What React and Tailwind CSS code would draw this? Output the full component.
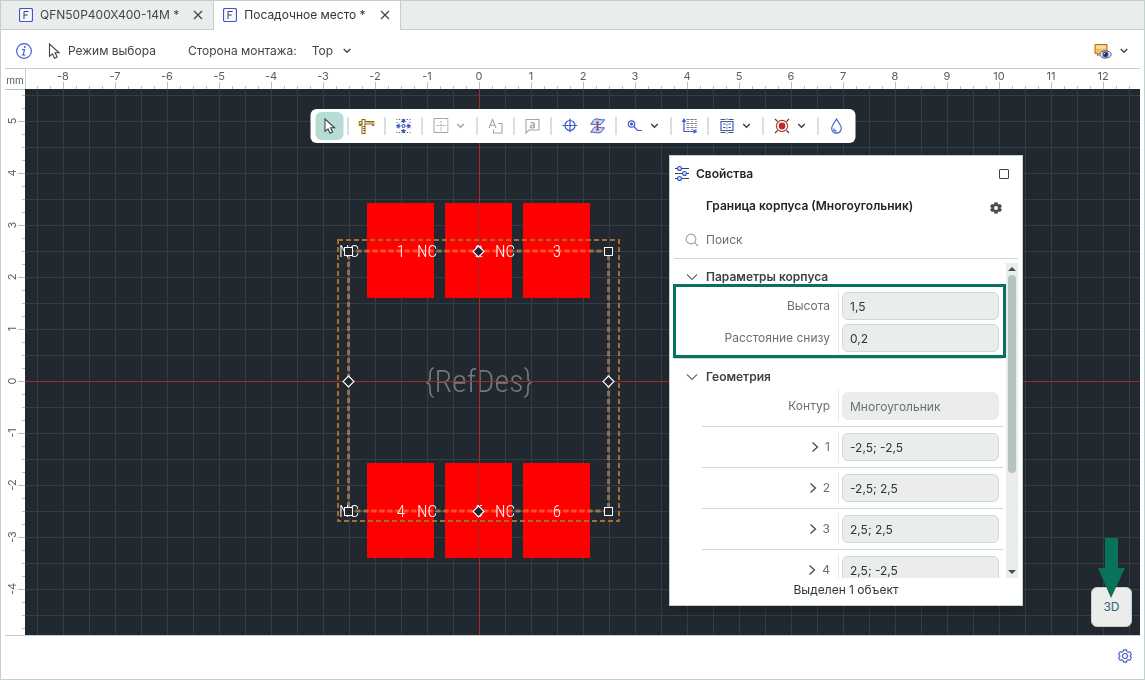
import React, { useEffect, useState } from 'react';

const UNIT = 52;
const ORIGIN_X = 454;
const ORIGIN_Y = 292;

const range = (from, to) => Array.from({ length: to - from + 1 }, (_, i) => from + i);

const useWindowSize = () => {
    const [size, setSize] = useState({ width: window.innerWidth, height: window.innerHeight });

    useEffect(() => {
        const onResize = () => setSize({ width: window.innerWidth, height: window.innerHeight });
        window.addEventListener('resize', onResize);
        return () => window.removeEventListener('resize', onResize);
    }, []);

    return size;
};

const ChevronDown = ({ className = '' }) => (
    <svg viewBox="0 0 8 6" className={`w-2 h-1.5 shrink-0 ${className}`} fill="none" stroke="currentColor" strokeWidth="1.4">
        <path d="M0.7 1 4 4.3 7.3 1" />
    </svg>
);

const CursorIcon = () => (
    <svg viewBox="0 0 16 16" className="w-4 h-4 shrink-0" fill="#fff" stroke="#3c4443" strokeWidth="1.1">
        <path d="M3.5 1v12.300l3-2.500 2 4.400 2.600-1.200-2-4.200h4z" />
    </svg>
);

const CaliperIcon = () => (
    <svg viewBox="0 0 16 16" className="w-4 h-4 shrink-0" fill="none" stroke="#94660f" strokeWidth="1.1">
        <path d="M3.500 1.500h3v14h-3zM6.500 3.500h9v4h-1.500v-1.500h-7.500M3.500 3.500h-2.900v4h1.300v-1.500h1.600" />
        <path d="M4.500 8.500h2M4.500 10.500h2M4.500 12.500h2M9.500 3.500v1.500M11.500 3.500v1.500M13.500 3.500v1.500" strokeWidth="1" />
    </svg>
);

const MoveGridIcon = () => (
    <svg viewBox="0 0 16 16" className="w-4 h-4 shrink-0" fill="none">
        <path d="M1 1.500h14M1 14.500h14" stroke="#4a5452" strokeDasharray="1 1.600" />
        <path d="M1.500 4v8M14.500 4v8" stroke="#4a5452" strokeDasharray="1 1.600" />
        <path d="M8 0.500 10.800 4h-5.600zM8 15.500 10.800 12h-5.600zM0.500 8 4 5.200v5.600zM15.500 8 12 5.200v5.600z" fill="#3c58cc" />
        <path d="M8 3v2M8 11v2M3 8h2M11 8h2" stroke="#3c58cc" strokeWidth="1.400" />
        <circle cx="8" cy="8" r="1.500" stroke="#3c58cc" strokeWidth="1.200" />
    </svg>
);

const CrossBoxIcon = () => (
    <svg viewBox="0 0 16 16" className="w-4 h-4 shrink-0" fill="none" stroke="#9da9a7">
        <path d="M1.500 0.500h14v14h-14z" />
        <path d="M8.500 3v10M4 7.500h10" strokeDasharray="2 1" />
    </svg>
);

const TextShapeIcon = () => (
    <svg viewBox="0 0 16 16" className="w-4 h-4 shrink-0" fill="none" stroke="#9da9a7" strokeWidth="1.100">
        <path d="M1.500 10 5 1.500 8.500 10M2.700 7.200h4.600M10.500 5.500h4v9.500h-8.500v-3.500" />
    </svg>
);

const NoteIcon = () => (
    <svg viewBox="0 0 16 16" className="w-4 h-4 shrink-0" fill="none" stroke="#9da9a7" strokeWidth="1.100">
        <path d="M1.500 1.500h13v10.500h-10l-3 3z" />
        <path d="M6 5.200c1.200-1 3.700-.8 3.700.8v4M9.700 7.200c-5-.3-4.700 2.700-2.200 2.700 1.200 0 2.200-.8 2.200-1.600" strokeWidth="1.400" />
    </svg>
);

const TargetIcon = () => (
    <svg viewBox="0 0 16 16" className="w-4 h-4 shrink-0" fill="none" stroke="#3c58cc" strokeWidth="1.200">
        <circle cx="8.500" cy="7.500" r="5" />
        <path d="M8.500 0.500v14M1 7.500h15" />
    </svg>
);

const LayersIcon = () => (
    <svg viewBox="0 0 16 16" className="w-4 h-4 shrink-0" stroke="#3c58cc" strokeWidth="1">
        <path d="M5 1.200c3.200-1.200 5.500 1.300 10 .5-1.500 1.500-1.700 4-4.500 5-3.300.8-6-1-9.500-.5C3.200 5 3 2.500 5 1.200z" fill="#c9d3f5" />
        <path d="M5 9.200c3.200-1.200 5.500 1.300 10 .5-1.500 1.500-1.700 4-4.500 5-3.300.8-6-1-9.500-.5C3.200 13 3 10.500 5 9.200z" fill="#c9d3f5" />
        <path d="M8 4v8M6.800 4.200h2.400M6.800 11.800h2.400" stroke="#b3302d" strokeWidth="1.400" />
    </svg>
);

const TrackIcon = () => (
    <svg viewBox="0 0 16 16" className="w-4 h-4 shrink-0" fill="none" stroke="#3c58cc" strokeWidth="1.200">
        <circle cx="5" cy="6" r="3.200" />
        <circle cx="5" cy="6" r="1" fill="#3c58cc" />
        <path d="M7.300 8.300 11 12.500h4.500" />
    </svg>
);

const AxesIcon = () => (
    <svg viewBox="0 0 16 16" className="w-4 h-4 shrink-0" fill="none">
        <path d="M5 1.500h10M5 5.500h10M5 9.500h10" stroke="#4a5452" strokeDasharray="1 1" />
        <path d="M6.500 1v11M10.500 1v11M14.500 1v11" stroke="#4a5452" strokeDasharray="1 1" />
        <path d="M2.500 3v10.500h11" stroke="#3c58cc" strokeWidth="1.200" />
        <path d="M2.500 0 4.800 4h-4.600zM16 13.500 12 11.200v4.600z" fill="#3c58cc" />
    </svg>
);

const ComponentIcon = () => (
    <svg viewBox="0 0 16 16" className="w-4 h-4 shrink-0" fill="none">
        <path d="M2 1.500h13M2 14.500h13" stroke="#4a5452" strokeWidth="1.200" strokeDasharray="5 3" />
        <path d="M2.500 3.500h12v9h-12z" stroke="#3c58cc" strokeWidth="1.200" />
        <path d="M4.500 6h2.500M4.500 9.500h2.500M10 6h2.500M10 9.500h2.500" stroke="#3c58cc" />
        <path d="M8.500 0v16" stroke="#7e8785" strokeDasharray="2 1" />
    </svg>
);

const PadIcon = () => (
    <svg viewBox="0 0 16 16" className="w-4 h-4 shrink-0" fill="none">
        <path d="M1.500 1l2.500 2.500M15.500 1l-2.500 2.500M1.500 15l2.500-2.500M15.500 15l-2.500-2.500" stroke="#3c4443" strokeWidth="1.200" />
        <circle cx="8.500" cy="8" r="5.600" stroke="#b3302d" strokeWidth="1.100" />
        <circle cx="8.500" cy="8" r="3.400" fill="#b3302d" />
    </svg>
);

const DropIcon = () => (
    <svg viewBox="0 0 16 16" className="w-4 h-4 shrink-0" fill="none" stroke="#3c58cc" strokeWidth="1.100">
        <path d="M8 1C6.500 4 3.200 7.300 3.200 10.500a4.800 4.600 0 0 0 9.600 0C12.800 7.300 9.500 4 8 1z" />
        <path d="M5.300 10.500a2.800 2.600 0 0 0 2.700 2.600" />
    </svg>
);

const InfoIcon = () => (
    <svg viewBox="0 0 16 16" className="w-4 h-4 shrink-0" fill="none" stroke="#3c58cc" strokeWidth="1.100">
        <circle cx="8" cy="8" r="7.400" />
        <path d="M6 6.500h2.500L7.200 12H9.500M5.800 12h1.400" />
        <circle cx="8.800" cy="4" r="0.900" fill="#3c58cc" stroke="none" />
    </svg>
);

const NotesViewIcon = () => (
    <svg viewBox="0 0 18 16" className="w-[18px] h-4 shrink-0">
        <path d="M1 1.500h12v9H6L3.500 13v-2.500H1z" fill="#f3bd62" stroke="#b46a1c" />
        <path d="M2 2.500h10v3H2z" fill="#fbdc9c" />
        <ellipse cx="11.500" cy="11.500" rx="5.700" ry="3.700" fill="#dfe3f2" stroke="#4a568c" />
        <circle cx="11.500" cy="11.500" r="2.900" fill="#3d4c8f" />
        <circle cx="11.500" cy="11.500" r="1.300" fill="#111936" />
        <circle cx="10.600" cy="10.600" r="0.700" fill="#fff" />
    </svg>
);

const SlidersIcon = () => (
    <svg viewBox="0 0 16 16" className="w-4 h-4 shrink-0" stroke="#3c4443" strokeWidth="1.100">
        <path d="M1 2.500h14M1 7.500h14M1 12.500h14" />
        <g fill="#cdd6f7" stroke="#3c58cc">
            <circle cx="5.500" cy="2.500" r="2" />
            <circle cx="10.500" cy="7.500" r="2" />
            <circle cx="5.500" cy="12.500" r="2" />
        </g>
    </svg>
);

const SearchIcon = () => (
    <svg viewBox="0 0 14 14" className="w-3.5 h-3.5 shrink-0" fill="none" stroke="#98a5a3" strokeWidth="1.100">
        <circle cx="6" cy="6" r="4.900" />
        <path d="M9.500 9.500 13 13" />
    </svg>
);

const GEAR = 'M6.200 1h3.600l.4 2 1.400.8 2-.7 1.800 3.100-1.600 1.300v1l1.600 1.300-1.800 3.100-2-.7-1.400.8-.4 2H6.200l-.4-2-1.400-.8-2 .7L.6 9.800l1.600-1.300v-1L.6 6.200l1.800-3.100 2 .7L5.800 3z';

const TABS = [
    { name: 'QFN50P400X400-14M *', active: false },
    { name: 'Посадочное место *', active: true },
];

const Tab = ({ name, active }) => (
    <div
        className={`flex items-center pr-2.5 border-r border-[#c3d1ce] ${
            active ? 'bg-white pl-[9px] pb-0.5 text-[#2f3635]' : 'bg-[#ebedec] pl-[18px] border-b text-[#3f4746]'
        }`}
    >
        <button className="flex items-center gap-[7px]">
            <svg viewBox="0 0 14 14" className="w-3.5 h-3.5 shrink-0" fill="#f7f8fe" stroke="#3c58cc">
                <rect x="0.500" y="0.500" width="13" height="13" rx="1.500" strokeWidth="1.200" />
                <path d="M5 11V3.500h4.500M5 7h3.700" stroke="#3c4443" fill="none" />
            </svg>
            <span>{name}</span>
        </button>
        <button aria-label="Закрыть" className="ml-3.5">
            <svg viewBox="0 0 10 10" className="w-2.5 h-2.5" fill="none" stroke="#3c4443" strokeWidth="1.200">
                <path d="M1 1l8 8M9 1l-8 8" />
            </svg>
        </button>
    </div>
);

const TopRuler = ({ length }) => (
    <svg className="w-full h-full" fontSize="11" fill="#56605e">
        {range(-34, Math.floor((length - ORIGIN_X) / 13)).map((k) => (
            <rect key={k} x={ORIGIN_X + k * 13} y={k % 4 === 0 ? 13 : 17} width="1" height="7" fill="#b4c3c0" />
        ))}
        {range(-8, Math.floor((length - ORIGIN_X - 8) / UNIT)).map((n) => (
            <text key={n} x={ORIGIN_X + n * UNIT} y="11" textAnchor="middle">{n}</text>
        ))}
    </svg>
);

const LeftRuler = ({ length }) => (
    <svg className="w-5 h-full shrink-0" fontSize="11" fill="#56605e">
        <rect width="20" height="1" fill="#b4c3c0" />
        {range(-22, Math.floor((length - ORIGIN_Y) / 13)).map((k) => (
            <rect key={k} x={k % 4 === 0 ? 13 : 17} y={ORIGIN_Y + k * 13} width="7" height="1" fill="#b4c3c0" />
        ))}
        {range(-5, Math.floor((length - ORIGIN_Y - 8) / UNIT)).map((n) => (
            <text key={n} transform={`translate(11 ${ORIGIN_Y + n * UNIT}) rotate(-90)`} textAnchor="middle">{-n}</text>
        ))}
    </svg>
);

const PADS = [
    { x: 342, y: 114, label: '1' },
    { x: 420, y: 114, label: '2' },
    { x: 498, y: 114, label: '3' },
    { x: 342, y: 374, label: '4' },
    { x: 420, y: 374, label: '5' },
    { x: 498, y: 374, label: '6' },
];

const Handle = ({ x, y, fill = '#22272f' }) => (
    <rect x={x - 4} y={y - 4} width="8" height="8" fill={fill} stroke="#fff" />
);
const MidHandle = ({ x, y }) => (
    <path d={`M${x} ${y - 5.5}l5.500 5.500-5.500 5.500-5.500-5.500z`} fill="#22272f" stroke="#fff" strokeWidth="1.100" />
);

const Board = () => (
    <svg className="absolute inset-0 w-full h-full" fontFamily="'Roboto Condensed', 'Liberation Sans Narrow', sans-serif">
        <defs>
            <pattern id="grid" x="12" y="6" width="26" height="26" patternUnits="userSpaceOnUse">
                <path d="M0.500 0v26M0 0.500h26" stroke="#363c43" />
            </pattern>
        </defs>
        <rect width="100%" height="100%" fill="#22282f" />
        <rect width="100%" height="100%" fill="url(#grid)" />
        {PADS.map((pad) => (
            <rect key={pad.label} x={pad.x} y={pad.y} width="67" height="95" fill="#f00" />
        ))}
        <text x="454" y="303" textAnchor="middle" fontSize="32" fontWeight="300" fill="#73777c">{'{RefDes}'}</text>
        <rect x="313" y="151" width="281" height="281" fill="none" stroke="#a56c2e" strokeWidth="2" strokeDasharray="5 3" />
        <g fill="none" stroke="#7a5028" className="mix-blend-screen">
            <rect x="323.500" y="162" width="260" height="260" strokeOpacity="0.500" />
            <rect x="323.500" y="162" width="260" height="260" strokeWidth="3" strokeDasharray="5 3" />
        </g>
        <g fill="#fff" fontSize="17" fontWeight="300" textAnchor="middle">
            {PADS.map((pad) => (
                <React.Fragment key={pad.label}>
                    <text x={pad.x - 18} y={pad.y + 54}>NC</text>
                    <text x={pad.x + 34} y={pad.y + 54}>{pad.label}</text>
                </React.Fragment>
            ))}
        </g>
        <path d="M454.500 0v2000M0 292.500h4000" stroke="#a42a2a" />
        <Handle x={323.5} y={162.5} />
        <Handle x={583.5} y={162.5} />
        <Handle x={323.5} y={422.5} />
        <Handle x={583.5} y={422.5} />
        <MidHandle x={453.5} y={162.5} />
        <MidHandle x={453.5} y={422.5} />
        <MidHandle x={323.5} y={292.5} />
        <MidHandle x={583.5} y={292.5} />
    </svg>
);

const TOOLS = [
    [{ name: 'Выбор', icon: CursorIcon, active: true }],
    [{ name: 'Измерение', icon: CaliperIcon }],
    [{ name: 'Сетка', icon: MoveGridIcon }],
    [{ name: 'Область', icon: CrossBoxIcon, menu: true, disabled: true }],
    [{ name: 'Текст', icon: TextShapeIcon, disabled: true }],
    [{ name: 'Примечание', icon: NoteIcon, disabled: true }],
    [{ name: 'Точка', icon: TargetIcon }, { name: 'Слои', icon: LayersIcon }],
    [{ name: 'Трек', icon: TrackIcon, menu: true }],
    [{ name: 'Начало координат', icon: AxesIcon }],
    [{ name: 'Компонент', icon: ComponentIcon, menu: true }],
    [{ name: 'Площадка', icon: PadIcon, menu: true }],
    [{ name: 'Заливка', icon: DropIcon }],
];

const Toolbar = () => (
    <div className="absolute top-5 left-1/2 -translate-x-1/2 h-[34px] flex items-center px-[5px] bg-white rounded-md">
        {TOOLS.map((group, i) => (
            <React.Fragment key={group[0].name}>
                {i > 0 && <span className="w-px h-[18px] mx-1 bg-[#b4c3c0]" />}
                {group.map((tool) => (
                    <button
                        key={tool.name}
                        aria-label={tool.name}
                        disabled={tool.disabled}
                        className={`h-7 flex items-center gap-2 pl-1.5 rounded-md ${tool.menu ? 'w-[46px]' : 'w-7'} ${
                            tool.active ? 'bg-[#b7dcd6]' : ''
                        } ${tool.disabled ? 'text-[#9da9a7]' : 'text-[#3c4443]'}`}
                    >
                        <tool.icon />
                        {tool.menu && <ChevronDown />}
                    </button>
                ))}
            </React.Fragment>
        ))}
    </div>
);

const SectionTitle = ({ children }) => (
    <button className="w-full h-5 flex items-center gap-2 pl-3 font-semibold text-[#3c4443]">
        <svg viewBox="0 0 12 8" className="w-3 h-2 shrink-0" fill="none" stroke="#5f6b69" strokeWidth="1.100">
            <path d="M1 1.500 6 6.500 11 1.500" />
        </svg>
        {children}
    </button>
);

const Row = ({ id, label, value, expandable, readOnly }) => (
    <div className="flex items-center">
        <label htmlFor={id} className="flex-1 flex items-center justify-end gap-1.5 pr-2 text-[#6a706f]">
            {expandable && (
                <svg viewBox="0 0 8 10" className="w-2 h-2.5 shrink-0" fill="none" stroke="#3c4443" strokeWidth="1.200">
                    <path d="M1.500 0.500 6.500 5 1.500 9.500" />
                </svg>
            )}
            {label}
        </label>
        <span className="self-stretch w-px -my-0.5 bg-[#e9eaf3]" />
        <input
            id={id}
            defaultValue={value}
            readOnly={readOnly}
            className={`w-[157px] h-7 ml-[3px] mr-1 px-[7px] rounded-md bg-[#ebedec] border outline-none ${
                readOnly ? 'border-[#ebedec] text-[#6a706f]' : 'border-[#cbd9d5] text-[#2f3635]'
            }`}
        />
    </div>
);

const POINTS = ['-2,5; -2,5', '-2,5; 2,5', '2,5; 2,5', '2,5; -2,5'];

const PropertiesPanel = () => (
    <section className="absolute top-[66px] left-[644px] w-[354px] h-[451px] flex flex-col px-1 bg-white border border-[#c3d1ce] shadow-lg">
        <header className="h-9 flex items-center">
            <SlidersIcon />
            <h2 className="ml-1.5 font-semibold text-[#202625]">Свойства</h2>
            <button aria-label="Развернуть" className="ml-auto mr-[9px] w-2.5 h-2.5 border border-[#3c4443] rounded-[1px]" />
        </header>
        <div className="h-8 flex items-center pl-8 pr-4">
            <h3 className="font-semibold text-[#202625] pb-1">Граница корпуса (Многоугольник)</h3>
            <button aria-label="Настройки" className="ml-auto">
                <svg viewBox="0 0 16 16" className="w-3 h-3" fill="none">
                    <path d={GEAR} fill="#46504e" stroke="#46504e" />
                    <circle cx="8" cy="8" r="2.600" fill="#fff" />
                </svg>
            </button>
        </div>
        <div className="h-[35px] flex items-center gap-[7px] pl-[11px] pb-0.5 border-b border-[#c9d8d4]">
            <SearchIcon />
            <input aria-label="Поиск" placeholder="Поиск" className="flex-1 outline-none placeholder:text-[#6a706f]" />
        </div>
        <div className="flex-1 min-h-0 mt-1 flex">
            <div className="flex-1 min-w-0 overflow-hidden pt-1 -ml-1 pl-1 pr-[3px]">
                <SectionTitle>Параметры корпуса</SectionTitle>
                <div className="relative pt-[5px] pb-1.5 flex flex-col gap-1 border-b border-[#c9d8d4]">
                    <Row id="height" label="Высота" value="1,5" />
                    <Row id="offset" label="Расстояние снизу" value="0,2" />
                    <div className="absolute -top-[3px] bottom-0 -left-px -right-[3px] border-[3px] border-[#08735a] pointer-events-none" />
                </div>
                <div className="pt-2">
                    <SectionTitle>Геометрия</SectionTitle>
                </div>
                <div className="pt-[5px] pb-1.5">
                    <Row id="contour" label="Контур" value="Многоугольник" readOnly />
                </div>
                {POINTS.map((point, i) => (
                    <div key={i} className="ml-7 py-1.5 border-t border-[#c9d8d4]">
                        <Row id={`point-${i + 1}`} label={i + 1} value={point} expandable />
                    </div>
                ))}
            </div>
            <div className="w-3 flex flex-col items-center bg-[#ebedec]">
                <svg viewBox="0 0 8 4" className="w-2 h-1 my-1 shrink-0" fill="#46504e"><path d="M0 4 4 0l4 4z" /></svg>
                <div className="w-2 h-[198px] rounded bg-[#b4c3c0]" />
                <svg viewBox="0 0 8 4" className="w-2 h-1 mt-auto mb-1 shrink-0" fill="#46504e"><path d="M0 0h8L4 4z" /></svg>
            </div>
        </div>
        <footer className="h-[27px] pb-1 flex items-center justify-center text-[#2f3635]">Выделен 1 объект</footer>
    </section>
);

const App = () => {
    const { width, height } = useWindowSize();

    return (
        <div className="h-screen flex flex-col border border-[#c3d1ce] bg-white font-['Inter','Noto_Sans',sans-serif] text-xs leading-4 overflow-hidden">
            <nav className="h-[29px] shrink-0 flex">
                {TABS.map((tab) => <Tab key={tab.name} {...tab} />)}
                <div className="flex-1 bg-[#ebedec] border-b border-[#c3d1ce]" />
            </nav>

            <div className="h-[38px] pt-1 shrink-0 flex items-center pl-[15px] pr-4 text-[#3f4746]">
                <InfoIcon />
                <button className="ml-3.5 flex items-center gap-1.5">
                    <CursorIcon />
                    Режим выбора
                </button>
                <span className="ml-8">Сторона монтажа:</span>
                <button className="ml-[15px] flex items-center gap-2.5">
                    Top
                    <ChevronDown />
                </button>
                <button aria-label="Показ примечаний" className="ml-auto flex items-center gap-2">
                    <NotesViewIcon />
                    <ChevronDown />
                </button>
            </div>

            <main className="flex-1 min-h-0 mx-1 flex flex-col">
                <div className="h-[21px] shrink-0 flex border-t border-[#c3d1ce]">
                    <span className="w-5 shrink-0 pt-[3px] text-center text-[10px] text-[#56605e]">mm</span>
                    <div className="flex-1 min-w-0 border-l border-[#c3d1ce]">
                        <div className="h-full -ml-px"><TopRuler length={width - 30} /></div>
                    </div>
                </div>
                <div className="flex-1 min-h-0 flex">
                    <LeftRuler length={height - 134} />
                    <div className="relative flex-1 min-w-0 overflow-hidden">
                        <Board />
                        <Toolbar />
                        <PropertiesPanel />
                        <button className="absolute right-2 bottom-2 w-[41px] h-10 rounded-md bg-[#ebedec] border border-[#c3d1ce] text-[#2c6670]">
                            3D
                        </button>
                        <svg viewBox="0 0 27 60" className="absolute right-[15px] bottom-[37px] w-[27px] h-[60px] pointer-events-none" fill="#08735a">
                            <path d="M7 0h13v30h7L13 60 0 30h7z" />
                        </svg>
                    </div>
                </div>
            </main>

            <footer className="h-11 shrink-0 mx-1 pb-1 flex items-center justify-end pr-2 border-t border-[#c3d1ce]">
                <button aria-label="Параметры">
                    <svg viewBox="0 0 16 16" className="w-3.5 h-3.5" fill="none" stroke="#3c58cc" strokeWidth="1.200">
                        <path d={GEAR} strokeLinejoin="round" />
                        <circle cx="8" cy="8" r="2.800" />
                    </svg>
                </button>
            </footer>
        </div>
    );
};

export default App;
